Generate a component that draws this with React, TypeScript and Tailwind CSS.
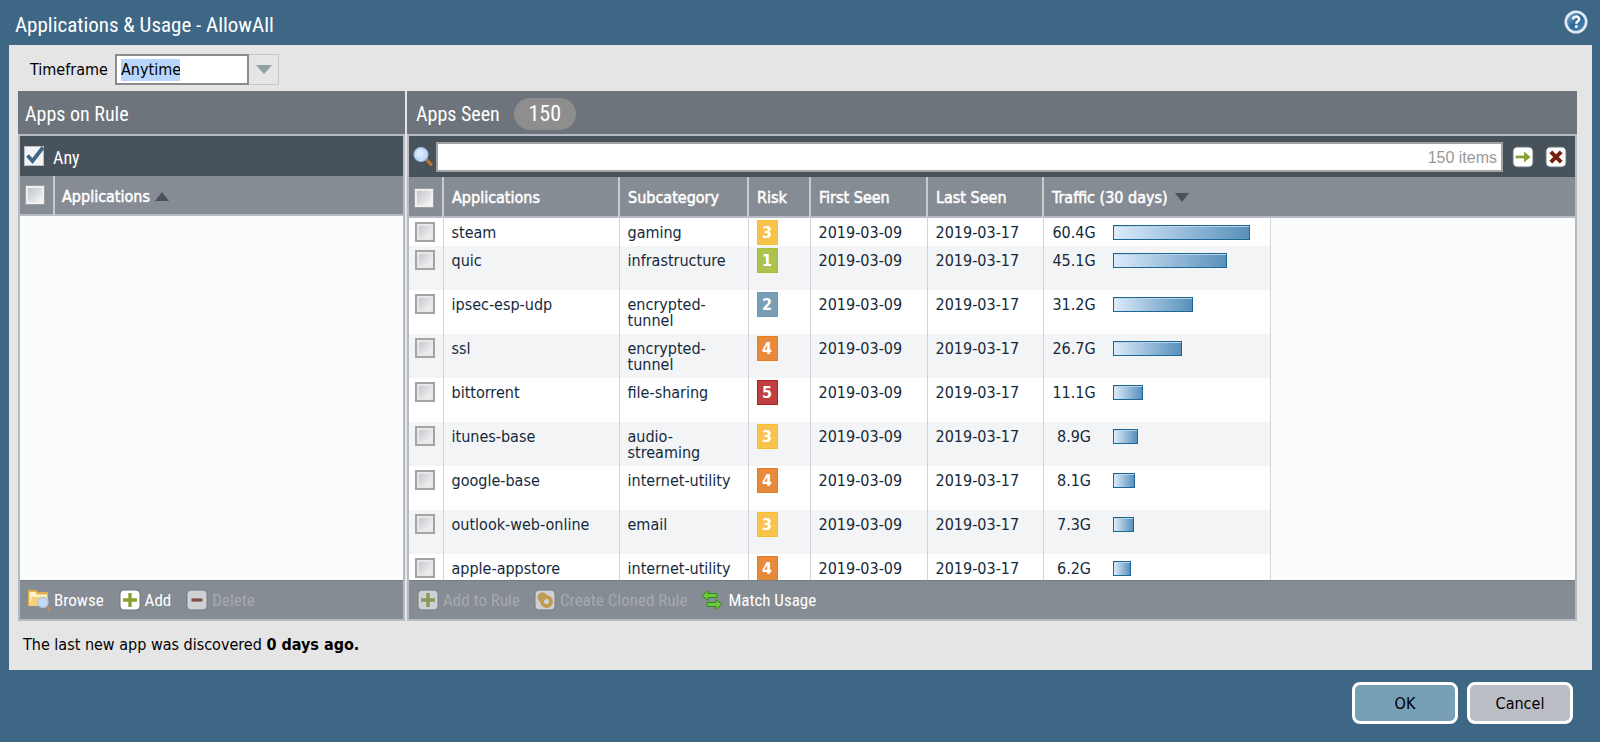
import React from "react";

const BODY = "font-['DejaVu_Sans_Condensed','DejaVu_Sans',sans-serif]";
const NARROW = "font-['Liberation_Sans_Narrow','Roboto_Condensed','Liberation_Sans',sans-serif]";

type Row = { app: string; sub: string; risk: number; traffic: string; bar: number };

const rows: Row[] = [
  { app: "steam", sub: "gaming", risk: 3, traffic: "60.4G", bar: 137 },
  { app: "quic", sub: "infrastructure", risk: 1, traffic: "45.1G", bar: 114 },
  { app: "ipsec-esp-udp", sub: "encrypted-tunnel", risk: 2, traffic: "31.2G", bar: 80 },
  { app: "ssl", sub: "encrypted-tunnel", risk: 4, traffic: "26.7G", bar: 69 },
  { app: "bittorrent", sub: "file-sharing", risk: 5, traffic: "11.1G", bar: 30 },
  { app: "itunes-base", sub: "audio-streaming", risk: 3, traffic: "8.9G", bar: 25 },
  { app: "google-base", sub: "internet-utility", risk: 4, traffic: "8.1G", bar: 22 },
  { app: "outlook-web-online", sub: "email", risk: 3, traffic: "7.3G", bar: 21 },
  { app: "apple-appstore", sub: "internet-utility", risk: 4, traffic: "6.2G", bar: 18 },
];

const riskColors: Record<number, string> = {
  1: "bg-[#adc24f] border-[#a4bf2e]",
  2: "bg-[#779fb5] border-[#6c9ab4]",
  3: "bg-[#f8c34c] border-[#fbbd2b]",
  4: "bg-[#e78a3c] border-[#e77e1a]",
  5: "bg-[#be4042] border-[#b91d20]",
};

function HeadCheck({ label }: { label: string }) {
  return (
    <input
      type="checkbox"
      aria-label={label}
      className="block size-[18px] appearance-none border-2 border-[#f0f0f0] bg-linear-to-br from-[#c2c4ca] to-[#f6f6f6] outline outline-[#9a9fa4]"
    />
  );
}

function RowCheck({ label }: { label: string }) {
  return (
    <input
      type="checkbox"
      aria-label={label}
      className="block size-5 appearance-none border-2 border-[#a4a4a4] bg-linear-to-br from-[#bfc2ca] to-[#fafafa] shadow-[inset_0_0_0_2px_#e8e8e8]"
    />
  );
}

function Tile({ children }: { children: React.ReactNode }) {
  return (
    <svg viewBox="0 0 22 22" className="size-[22px] shrink-0" aria-hidden="true">
      <rect x="0.5" y="0.5" width="21" height="21" rx="5" fill="#66747d" />
      <rect x="1.5" y="1.5" width="19" height="19" rx="4" fill="#fff" />
      {children}
    </svg>
  );
}

export default function App() {
  return (
    <div className={`flex h-screen flex-col bg-[#3d6785] text-base leading-4 text-black ${BODY}`}>
      <header className="flex h-[45px] shrink-0 items-center justify-between pt-1 pr-3 pl-[15px]">
        <h1 className={`text-[21px] leading-6 text-white ${NARROW}`}>Applications &amp; Usage - AllowAll</h1>
        <button type="button" aria-label="Help" className="mb-[6px]">
          <svg viewBox="0 0 24 24" className="size-6" aria-hidden="true">
            <defs>
              <linearGradient id="help" x1="0" y1="0" x2="1" y2="1">
                <stop offset="0" stopColor="#8db4d2" />
                <stop offset="0.5" stopColor="#2d6796" />
                <stop offset="1" stopColor="#5c97c2" />
              </linearGradient>
            </defs>
            <circle cx="12" cy="12" r="10.2" fill="url(#help)" stroke="#e3eaf5" strokeWidth="2.6" />
            <path d="M9 9.6c0-4 6.2-3.8 6.2-.4 0 2.2-2.9 2.1-2.9 4.5" fill="none" stroke="#fff" strokeWidth="2.5" />
            <circle cx="12.3" cy="16.5" r="1.5" fill="#fff" />
          </svg>
        </button>
      </header>

      <main className="mr-2 ml-[9px] flex min-h-0 flex-1 flex-col bg-[#e5e5e5] pr-[15px] pl-[9px]">
        <div className="flex h-[46px] shrink-0 items-start pt-[9px] pl-3">
          <label htmlFor="timeframe" className="w-[85px] pt-2">Timeframe</label>
          <div className="flex h-[31px]">
            <div className="flex w-[134px] items-center border-2 border-[#8b8b8b] bg-white pl-1">
              <input
                id="timeframe"
                defaultValue="Anytime"
                size={6}
                className="h-[22px] w-[59px] bg-[#b8d6fb] outline-none"
              />
            </div>
            <button type="button" aria-label="Show timeframes" className="flex w-[30px] items-center justify-center border border-l-0 border-[#c6c6c6]">
              <svg viewBox="0 0 16 9" className="h-[9px] w-4" aria-hidden="true">
                <path d="M0 0h16L8 9z" fill="#93a0a5" />
              </svg>
            </button>
          </div>
        </div>

        <div className="flex min-h-0 flex-1 gap-[2px]">
          <section className="flex w-[387px] shrink-0 flex-col">
            <h2 className={`flex h-[43px] shrink-0 items-center bg-[#6d747b] pt-[2px] pl-[7px] text-[20px] text-white ${NARROW}`}>Apps on Rule</h2>
            <div className="flex min-h-0 flex-1 flex-col border-2 border-[#b6bac2] bg-[#fbfdfc]">
              <div className="flex h-10 shrink-0 items-center bg-[#48525b] pl-1">
                <span className="relative mr-[9px] size-5">
                  <input id="any-app" type="checkbox" defaultChecked className="block size-5 appearance-none border border-[#b9bec4] bg-[#f4f5f6]" />
                  <svg viewBox="0 0 20 20" className="pointer-events-none absolute inset-0 size-5" aria-hidden="true">
                    <path d="M3.5 9.5l5 5.500L19 1.500" fill="none" stroke="#3d6785" strokeWidth="3.800" />
                  </svg>
                </span>
                <label htmlFor="any-app" className={`pt-[3px] text-[18px] leading-5 text-white ${NARROW}`}>Any</label>
              </div>
              <table className="w-full table-fixed border-collapse text-left">
                <thead>
                  <tr className="h-[39px] border-b-2 border-[#b6bac2] bg-[#868c93] text-white">
                    <th className="w-[34px] border-r-2 border-[#c8cbce] pl-[6px]"><HeadCheck label="Select all rule applications" /></th>
                    <th className="pt-[3px] pl-[7px] font-normal [-webkit-text-stroke:0.5px_white]">
                      <span className="flex items-center gap-[5px]">
                        Applications
                        <svg viewBox="0 0 14 9" className="h-[9px] w-[14px]" aria-hidden="true"><path d="M0 9h14L7 0z" fill="#48525b" /></svg>
                      </span>
                    </th>
                  </tr>
                </thead>
              </table>
              <div className="flex-1" />
              <div className={`flex h-[39px] shrink-0 items-center gap-[15px] border-t border-[#747b83] bg-[#868c93] pl-[7px] text-[17px] leading-5 text-white ${NARROW}`}>
                <button type="button" className="flex items-center gap-[3px]">
                  <svg viewBox="0 0 24 22" className="h-[22px] w-6" aria-hidden="true">
                    <path d="M1 1h8l2 2h10v14H1z" fill="#dfb050" />
                    <path d="M2.5 3h6l1.500 2.500h10V15H2.500z" fill="#fdf3c4" />
                    <path d="M2 17L5 8h16v9z" fill="#f3d27a" />
                    <path d="M19 17l4 4" stroke="#c68a5a" strokeWidth="2.500" />
                    <circle cx="16" cy="13.500" r="5.200" fill="#c3daf5" stroke="#a9bfe0" />
                  </svg>
                  Browse
                </button>
                <button type="button" className="flex items-center gap-1">
                  <Tile><path d="M11 4v14M4 11h14" stroke="#8ba035" strokeWidth="3.400" /></Tile>
                  Add
                </button>
                <button type="button" disabled className="flex items-center gap-1 text-[#a5a9ae]">
                  <span className="opacity-60"><Tile><path d="M5.500 11h11" stroke="#7a2410" strokeWidth="3.200" /></Tile></span>
                  Delete
                </button>
              </div>
            </div>
          </section>

          <section className="flex min-w-0 flex-1 flex-col">
            <h2 className={`flex h-[43px] shrink-0 items-center gap-[14px] bg-[#6d747b] pt-[2px] pl-[9px] text-[20px] text-white ${NARROW}`}>
              Apps Seen
              <span className="flex h-8 w-[62px] items-center justify-center rounded-full bg-[#8e8e8e] text-[22px]">150</span>
            </h2>
            <div className="flex min-h-0 flex-1 flex-col border-2 border-[#b6bac2] bg-[#fbfdfc]">
              <div className="flex h-[41px] shrink-0 items-center bg-[#48525b] pr-2 pl-1">
                <svg viewBox="0 0 20 22" className="mr-[3px] h-[22px] w-5" aria-hidden="true">
                  <path d="M13 13l5 5.500" stroke="#b9742f" strokeWidth="3.200" strokeLinecap="round" />
                  <circle cx="8" cy="8.500" r="7" fill="#c6defa" stroke="#9bb9e4" strokeWidth="1.200" />
                  <circle cx="7" cy="7.500" r="3.500" fill="#dcecfd" />
                </svg>
                <div className="flex h-[30px] flex-1 items-center border-2 border-[#a3a3a3] bg-white pt-[2px] pr-1 font-['Liberation_Sans',sans-serif] text-base text-[#999]">
                  <input aria-label="Search applications" className="min-w-0 flex-1 outline-none" />
                  150 items
                </div>
                <button type="button" aria-label="Apply filter" className="ml-[9px]">
                  <Tile><path d="M3.500 11h10" stroke="#8ba035" strokeWidth="2.800" /><path d="M12 5.500l6.500 5.500-6.500 5.500z" fill="#8ba035" /></Tile>
                </button>
                <button type="button" aria-label="Clear filter" className="ml-[11px]">
                  <Tile><path d="M5.800 5.800l10.400 10.400M16.200 5.800L5.800 16.200" stroke="#77200b" strokeWidth="4" /></Tile>
                </button>
              </div>
              <div className="min-h-0 flex-1 overflow-hidden">
                <table className="w-full table-fixed border-collapse text-left text-[#142a3c]">
                  <colgroup>
                    <col className="w-[34px]" />
                    <col className="w-[176px]" />
                    <col className="w-[129px]" />
                    <col className="w-[62px]" />
                    <col className="w-[117px]" />
                    <col className="w-[116px]" />
                    <col className="w-[227px]" />
                    <col />
                  </colgroup>
                  <thead>
                    <tr className="h-10 border-b-2 border-[#b6bac2] bg-[#868c93] text-white *:border-[#c8cbce] *:pt-[2px] *:font-normal *:[-webkit-text-stroke:0.5px_white]">
                      <th className="border-r-2 pl-[6px]"><HeadCheck label="Select all seen applications" /></th>
                      <th className="border-r-2 pl-2">Applications</th>
                      <th className="border-r-2 pl-2">Subcategory</th>
                      <th className="border-r-2 pl-2">Risk</th>
                      <th className="border-r-2 pl-2">First Seen</th>
                      <th className="border-r-2 pl-2">Last Seen</th>
                      <th colSpan={2} className="pl-2">
                        <span className="flex items-center gap-[7px]">
                          Traffic (30 days)
                          <svg viewBox="0 0 14 9" className="h-[9px] w-[14px]" aria-hidden="true"><path d="M0 0h14L7 9z" fill="#48525b" /></svg>
                        </span>
                      </th>
                    </tr>
                  </thead>
                  <tbody>
                    {rows.map((r, i) => (
                      <tr
                        key={r.app}
                        className={`${i === 0 ? "h-[29px]" : "h-11"} align-top *:border-r *:border-[#d3d5d9] *:pt-[7px] *:pl-2`}
                      >
                        <td className={`${i % 2 ? "bg-[#f3f4f6]" : "bg-white"} pt-1! pl-[6px]!`}><RowCheck label={`Select ${r.app}`} /></td>
                        <td className={i % 2 ? "bg-[#f3f4f6]" : "bg-white"}>{r.app}</td>
                        <td className={`${i % 2 ? "bg-[#f3f4f6]" : "bg-white"} pr-2`}>{r.sub}</td>
                        <td className={`${i % 2 ? "bg-[#f3f4f6]" : "bg-white"} pt-[2px]!`}>
                          <span className={`flex h-[25px] w-[21px] items-center justify-center border font-bold text-white ${riskColors[r.risk]}`}>{r.risk}</span>
                        </td>
                        <td className={i % 2 ? "bg-[#f3f4f6]" : "bg-white"}>2019-03-09</td>
                        <td className={i % 2 ? "bg-[#f3f4f6]" : "bg-white"}>2019-03-17</td>
                        <td className={i % 2 ? "bg-[#f3f4f6]" : "bg-white"}>
                          <div className="flex">
                            <span className="w-[45px] text-center">{r.traffic}</span>
                            <span
                              className="ml-4 h-[15px] border border-[#1d6795] bg-linear-to-r from-[#dcecfa] to-[#5890bb] shadow-[inset_0_1px_0_#b9d3e8]"
                              style={{ width: r.bar }}
                            />
                          </div>
                        </td>
                        <td className="border-r-0!" />
                      </tr>
                    ))}
                  </tbody>
                </table>
              </div>
              <div className={`flex h-[39px] shrink-0 items-center gap-[14px] border-t border-[#747b83] bg-[#868c93] pl-2 text-[17px] leading-5 text-white ${NARROW}`}>
                <button type="button" disabled className="flex items-center gap-1 text-[#a5a9ae]">
                  <span className="opacity-60"><Tile><path d="M11 4v14M4 11h14" stroke="#8ba035" strokeWidth="3.400" /></Tile></span>
                  Add to Rule
                </button>
                <button type="button" disabled className="flex items-center gap-1 text-[#a5a9ae]">
                  <span className="opacity-60">
                    <Tile>
                      <circle cx="8.500" cy="8.500" r="5" fill="#eca51c" />
                      <circle cx="12.500" cy="12.500" r="4.500" fill="#fff" stroke="#eca51c" strokeWidth="3.800" />
                      <circle cx="8.500" cy="8.500" r="2.500" fill="#e0a94a" />
                    </Tile>
                  </span>
                  Create Cloned Rule
                </button>
                <button type="button" className="flex items-center gap-[5px]">
                  <svg viewBox="0 0 22 22" className="size-[22px]" aria-hidden="true">
                    <path d="M1 6.500L7 1.500v3h9v4H7v3z" fill="#6cc83c" stroke="#2f8a1c" />
                    <path d="M21 15.500l-6-5v3H6v4h9v3z" fill="#6cc83c" stroke="#2f8a1c" />
                  </svg>
                  Match Usage
                </button>
              </div>
            </div>
          </section>
        </div>

        <p className="h-[49px] shrink-0 pt-4 pl-[5px]">
          The last new app was discovered <strong>0 days ago.</strong>
        </p>
      </main>

      <footer className="flex h-[72px] shrink-0 justify-end gap-[9px] pt-3 pr-[27px]">
        <button type="button" className="h-[42px] w-[106px] rounded-lg border-3 border-white bg-[#779fb5] pt-[2px]">OK</button>
        <button type="button" className="h-[42px] w-[106px] rounded-lg border-3 border-white bg-[#bcbec5] pt-[2px]">Cancel</button>
      </footer>
    </div>
  );
}
